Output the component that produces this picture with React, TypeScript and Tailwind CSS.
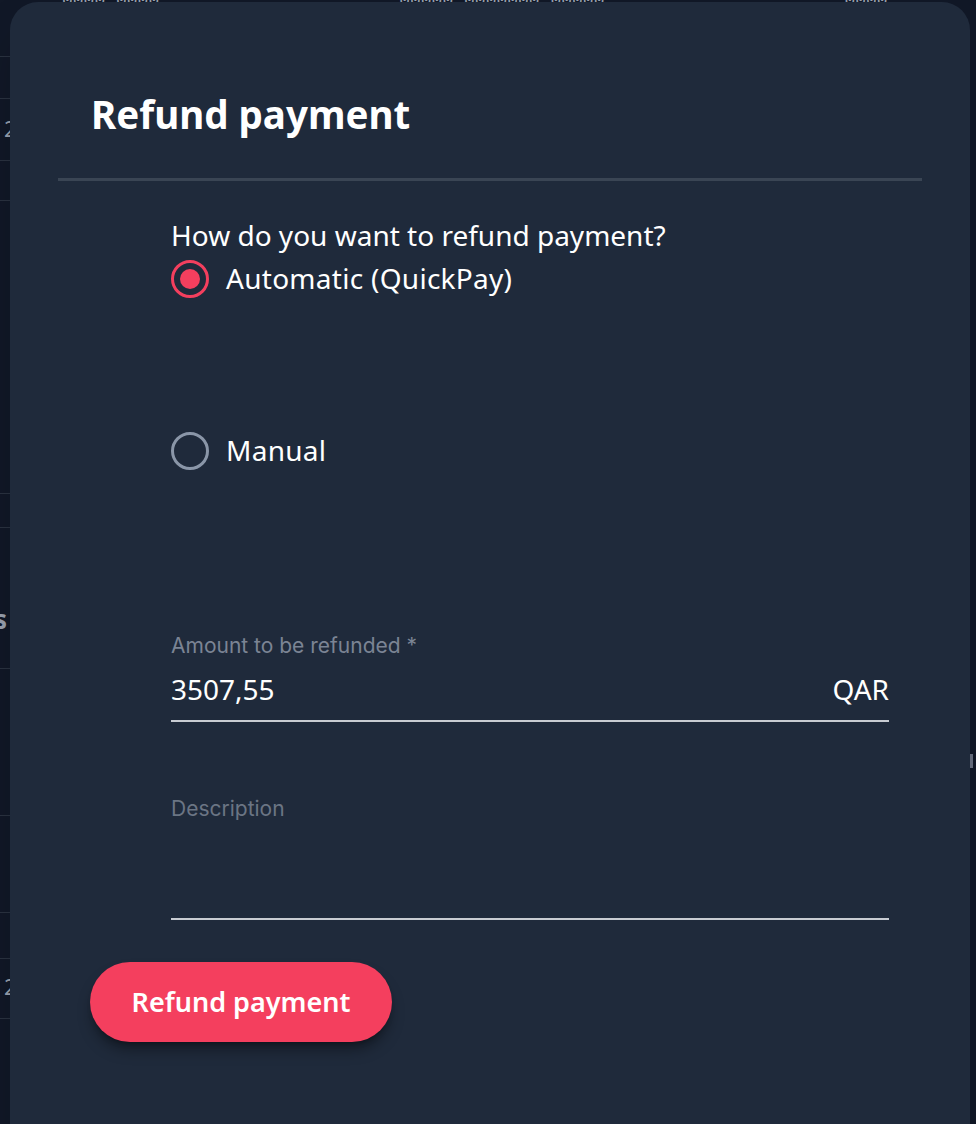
export default function App() {
  const rows = [56, 98, 160, 200, 493, 527, 668, 815, 912, 958, 1018];
  return (
    <div className="relative h-[1124px] w-full overflow-hidden bg-[#111827] font-['Noto_Sans',sans-serif]">
      {/* page behind the dialog */}
      <div className="absolute inset-0">
        <div className="flex gap-[240px] pl-[62px] -mt-[12px] text-[18px] font-['Liberation_Mono',monospace] text-gray-400">
          <span>0000 0000</span>
          <span>00000 0000000 00000</span>
          <span>0000</span>
        </div>
        {rows.map((y) => (
          <div key={y} className="absolute left-0 right-0 h-px bg-[#2a3240]" style={{ top: y }} />
        ))}
        <span className="absolute left-[4px] top-[112px] text-[22px] text-gray-400">2</span>
        <span className="absolute left-[-6px] top-[600px] text-[26px] font-bold text-gray-400">s</span>
        <span className="absolute left-[4px] top-[970px] text-[22px] text-gray-400">2</span>
        <div className="absolute right-0 top-0 bottom-0 w-[6px] bg-[#111827]">
          <div className="absolute top-[754px] h-[14px] w-[3px] bg-gray-500" />
        </div>
      </div>

      {/* dialog */}
      <div className="absolute left-[10px] right-[6px] top-[2px] bottom-[-40px] rounded-[28px] bg-[#1f2a3b] shadow-2xl">
        <div className="px-[81px] pt-[88px] pb-[40px]">
          <h2 className="text-[38.5px] font-bold leading-[48px] text-white">Refund payment</h2>
        </div>
        <div className="mx-[48px] h-[3px] bg-[#3a4554]" />

        <div className="pl-[161px] pr-[81px] pt-[38px]">
          <p className="text-[28px] leading-[32px] text-white">How do you want to refund payment?</p>

          <div className="mt-[8px] flex flex-col">
            <label className="flex h-[40px] items-center gap-[17px] text-white">
              <span className="flex h-[38px] w-[38px] items-center justify-center rounded-full border-[3px] border-[#f43f5e]">
                <span className="h-[20px] w-[20px] rounded-full bg-[#f43f5e]" />
              </span>
              <span className="-mt-[3px] text-[28px] leading-[38px] tracking-[0.01em]">Automatic (QuickPay)</span>
            </label>
            <label className="mt-[132px] flex h-[40px] items-center gap-[17px] text-white">
              <span className="h-[38px] w-[38px] rounded-full border-[3px] border-[#8a96a8]" />
              <span className="-mt-[3px] text-[28px] leading-[38px] tracking-[0.01em]">Manual</span>
            </label>
          </div>

          <div className="mt-[163px]">
            <div className="font-['Inter',sans-serif] text-[21px] leading-[24px] text-[#7b8494]">
              Amount to be refunded *
            </div>
            <div className="mt-[15px] flex items-center justify-between border-b-2 border-[#c8ccd2] pb-[15px] text-[28px] leading-[32px] text-white">
              <span>3507,55</span>
              <span>QAR</span>
            </div>
          </div>

          <div className="mt-[75px]">
            <div className="font-['Inter',sans-serif] text-[21px] leading-[24px] text-[#6b7584]">Description</div>
            <div className="h-[99px] border-b-2 border-[#c8ccd2]" />
          </div>
        </div>

        <div className="px-[80px] pt-[42px]">
          <button className="h-[80px] w-[302px] rounded-full bg-[#f43f5e] text-[27px] font-semibold text-white shadow-lg shadow-black/40">
            Refund payment
          </button>
        </div>
      </div>
    </div>
  );
}
